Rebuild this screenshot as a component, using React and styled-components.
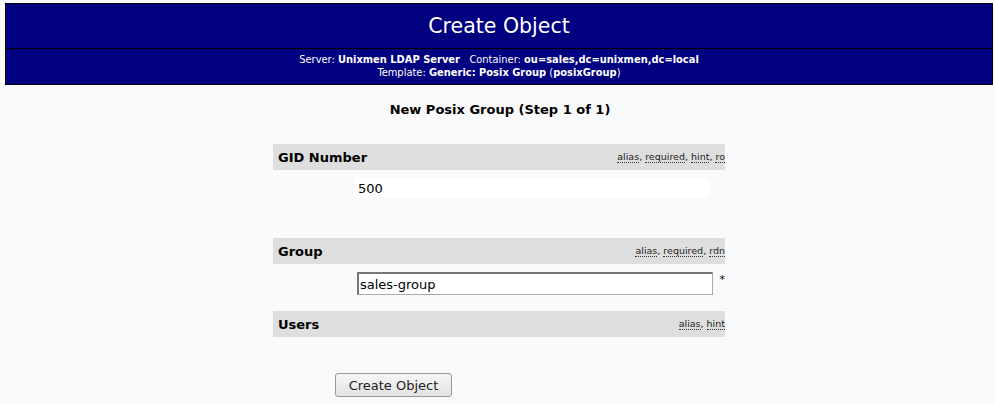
import React from "react";
import styled, { createGlobalStyle } from "styled-components";

const Global = createGlobalStyle`
  html, body { margin: 0; padding: 0; }
  body {
    background: #f9fafc;
    font-family: "DejaVu Sans", "Liberation Sans", sans-serif;
    color: #000;
  }
`;

const Page = styled.div`
  padding: 3px 2px 0 5px;
  display: flex;
  flex-direction: column;
`;

const Header = styled.div`
  background: #000080;
  border: 1px solid #000;
  color: #fff;
  display: flex;
  flex-direction: column;
`;

const Title = styled.div`
  height: 44px;
  border-bottom: 1px solid #000;
  display: flex;
  align-items: center;
  justify-content: center;
  font-size: 20.5px;
  padding-top: 0;
`;

const SubInfo = styled.div`
  height: 34px;
  display: flex;
  flex-direction: column;
  align-items: center;
  justify-content: center;
  font-family: "DejaVu Sans Condensed", "DejaVu Sans", sans-serif;
  font-size: 11px;
  line-height: 13px;
  padding-bottom: 1px;
  b { font-weight: bold; }
`;

const Step = styled.div`
  margin-top: 17px;
  text-align: center;
  font-weight: bold;
  font-size: 13px;
  line-height: 16px;
  padding-left: 2px;
`;

const Form = styled.div`
  width: 452px;
  margin: 26px auto 0;
  display: flex;
  flex-direction: column;
`;

const AttrHead = styled.div`
  height: 26px;
  background: #dedede;
  display: flex;
  align-items: center;
  justify-content: space-between;
  overflow: hidden;
  margin-top: ${(p) => p.$mt || 0}px;
`;

const Label = styled.span`
  font-weight: bold;
  font-size: 13px;
  padding-left: 5px;
  white-space: nowrap;
`;

const Hints = styled.span`
  font-size: 9.5px;
  white-space: nowrap;
  color: #222;
  padding-bottom: 2px;
  abbr {
    text-decoration: none;
    border-bottom: 1px dotted #333;
  }
`;

const ValueRow = styled.div`
  display: flex;
  align-items: center;
  margin-top: 8px;
  padding-left: ${(p) => p.$pl}px;
  height: ${(p) => p.$h}px;
`;

const ReadOnly = styled.div`
  width: 351px;
  height: 20px;
  background: #fff;
  font-size: 13px;
  display: flex;
  align-items: center;
  padding-left: 4px;
`;

const Input = styled.input`
  box-sizing: border-box;
  width: 356px;
  height: 23px;
  border: 1px solid #aaa;
  border-top: 2px solid #777;
  border-left: 2px solid #777;
  background: #fff;
  font-family: "DejaVu Sans", sans-serif;
  font-size: 13px;
  padding: 0 0 0 1px;
  color: #000;
  outline: none;
`;

const Star = styled.span`
  font-size: 11px;
  margin-left: 7px;
  align-self: flex-start;
  margin-top: 1px;
`;

const ButtonRow = styled.div`
  width: 452px;
  margin: 36px auto 0;
  padding-left: 62px;
  box-sizing: border-box;
`;

const Button = styled.button`
  height: 24px;
  width: 117px;
  border: 1px solid #999;
  border-radius: 3px;
  background: linear-gradient(#f6f6f6, #e2e2e2);
  font-family: "DejaVu Sans", sans-serif;
  font-size: 13px;
  color: #222;
  padding: 0;
`;

export default function App() {
  return (
    <>
      <Global />
      <Page>
        <Header>
          <Title>Create Object</Title>
          <SubInfo>
            <div>
              Server: <b>Unixmen LDAP Server</b>&nbsp;&nbsp; Container: <b>ou=sales,dc=unixmen,dc=local</b>
            </div>
            <div>
              Template: <b>Generic: Posix Group</b> (<b>posixGroup</b>)
            </div>
          </SubInfo>
        </Header>
        <Step>New Posix Group (Step 1 of 1)</Step>
        <Form>
          <AttrHead>
            <Label>GID Number</Label>
            <Hints>
              <abbr>alias</abbr>, <abbr>required</abbr>, <abbr>hint</abbr>, <abbr>ro</abbr>
            </Hints>
          </AttrHead>
          <ValueRow $h={20} $pl={81}>
            <ReadOnly>500</ReadOnly>
          </ValueRow>
          <AttrHead $mt={40}>
            <Label>Group</Label>
            <Hints>
              <abbr>alias</abbr>, <abbr>required</abbr>, <abbr>rdn</abbr>
            </Hints>
          </AttrHead>
          <ValueRow $h={23} $pl={84}>
            <Input defaultValue="sales-group" />
            <Star>*</Star>
          </ValueRow>
          <AttrHead $mt={16}>
            <Label>Users</Label>
            <Hints>
              <abbr>alias</abbr>, <abbr>hint</abbr>
            </Hints>
          </AttrHead>
        </Form>
        <ButtonRow>
          <Button>Create Object</Button>
        </ButtonRow>
      </Page>
    </>
  );
}
